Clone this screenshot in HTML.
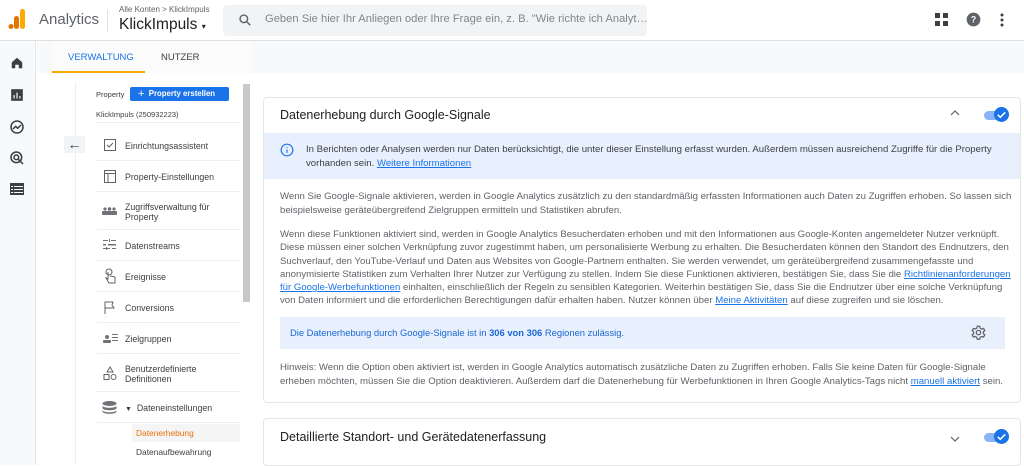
<!DOCTYPE html>
<html><head><meta charset="utf-8"><style>
*{box-sizing:border-box;margin:0;padding:0}
body{width:1024px;height:465px;overflow:hidden;background:#fff;font-family:"Liberation Sans",sans-serif;color:#5f6368;position:relative}
.a{position:absolute}
a{color:#1a73e8;text-decoration:underline}
.p{font-size:9.6px;line-height:13.5px;color:#5f6368}
.mi{position:absolute;left:97px;width:143px;border-bottom:1px solid #eee;font-size:8.8px;color:#3c4043}
.mi span{position:absolute;left:28px}
</style></head><body>
<!-- header -->
<div class="a" style="left:0;top:0;width:1024px;height:41px;border-bottom:1px solid #e0e0e0;background:#fff"></div>
<svg class="a" style="left:8px;top:8px" width="20" height="22" viewBox="0 0 20 22"><rect x="12" y="1" width="5" height="20" rx="2.5" fill="#f9ab00"/><rect x="6" y="8" width="5" height="13" rx="2.5" fill="#e37400"/><circle cx="3" cy="18.5" r="2.5" fill="#e37400"/></svg>
<div class="a" style="left:39px;top:11px;font-size:15px;color:#5f6368">Analytics</div>
<div class="a" style="left:107px;top:10px;width:1px;height:22px;background:#e0e0e0"></div>
<div class="a" style="left:119px;top:5px;font-size:8px;color:#5f6368">Alle Konten &gt; KlickImpuls</div>
<div class="a" style="left:119px;top:16px;font-size:15.5px;color:#202124">KlickImpuls <span style="font-size:8px">▾</span></div>
<div class="a" style="left:223px;top:5px;width:424px;height:31px;background:#f1f3f4;border-radius:4px"></div>
<svg class="a" style="left:238px;top:13px" width="14" height="14" viewBox="0 0 24 24"><circle cx="10" cy="10" r="6.5" stroke="#5f6368" stroke-width="2.5" fill="none"/><path d="M15 15l6 6" stroke="#5f6368" stroke-width="2.5"/></svg>
<div class="a" style="left:265px;top:13px;font-size:11.2px;color:#80868b;white-space:nowrap">Geben Sie hier Ihr Anliegen oder Ihre Frage ein, z. B. "Wie richte ich Analyt…</div>
<svg class="a" style="left:935px;top:13px" width="13" height="13" viewBox="0 0 13 13" fill="#3c4043"><rect x="0" y="0" width="5" height="5"/><rect x="8" y="0" width="5" height="5"/><rect x="0" y="8" width="5" height="5"/><rect x="8" y="8" width="5" height="5"/></svg>
<svg class="a" style="left:966px;top:12px" width="15" height="15" viewBox="0 0 24 24"><circle cx="12" cy="12" r="11" fill="#5f6368"/><text x="12" y="17" font-size="14" font-weight="bold" text-anchor="middle" fill="#fff" font-family="Liberation Sans">?</text></svg>
<svg class="a" style="left:1000px;top:13px" width="4" height="14" viewBox="0 0 4 14" fill="#3c4043"><circle cx="2" cy="2" r="1.5"/><circle cx="2" cy="7" r="1.5"/><circle cx="2" cy="12" r="1.5"/></svg>
<!-- left rail -->
<div class="a" style="left:0;top:41px;width:36px;height:424px;background:#f8f9fa;border-right:1px solid #e8e8e8"></div>
<svg class="a" style="left:10px;top:56px" width="14" height="14" viewBox="0 0 24 24" fill="#3c4043"><path d="M3 11L12 3l9 8v10h-6v-6H9v6H3z"/></svg>
<svg class="a" style="left:10px;top:88px" width="14" height="14" viewBox="0 0 24 24" fill="#3c4043"><path d="M2 2h20v20H2z"/><path d="M6 12h2v6H6zM11 8h2v10h-2zM16 14h2v4h-2z" fill="#fff"/></svg>
<svg class="a" style="left:9px;top:119px" width="16" height="16" viewBox="0 0 24 24" fill="none" stroke="#3c4043" stroke-width="2.3"><circle cx="12" cy="12" r="9"/><path d="M6 15l4-4 3 3 5-5"/></svg>
<svg class="a" style="left:9px;top:150px" width="16" height="16" viewBox="0 0 24 24" fill="none" stroke="#3c4043" stroke-width="2.3"><circle cx="11" cy="11" r="8"/><circle cx="11" cy="11" r="3.5"/><path d="M13 13l8 8"/></svg>
<svg class="a" style="left:10px;top:183px" width="14" height="12" viewBox="0 0 14 12" fill="#3c4043"><rect width="14" height="12"/><path d="M1 3h2v1H1zM4 3h9v1H4zM1 6h2v1H1zM4 6h9v1H4zM1 9h2v1H1zM4 9h9v1H4z" fill="#fff"/></svg>
<!-- tab bar -->
<div class="a" style="left:37px;top:41px;width:987px;height:32px;background:#f8f9fa"></div>
<div class="a" style="left:52px;top:41px;width:200px;height:32px;background:#fbfbfc"></div>
<div class="a" style="left:68px;top:52px;font-size:9.5px;color:#1a73e8">VERWALTUNG</div>
<div class="a" style="left:161px;top:52px;font-size:9.5px;color:#3c4043">NUTZER</div>
<div class="a" style="left:52px;top:71px;width:93px;height:2px;background:#f9ab00"></div>
<!-- left panel -->
<div class="a" style="left:75px;top:83px;width:1px;height:382px;background:#eee"></div>
<div class="a" style="left:243px;top:84px;width:7px;height:218px;background:#c8c8c8"></div>
<div class="a" style="left:96px;top:90px;font-size:7.5px;color:#3c4043">Property</div>
<div class="a" style="left:130px;top:87px;width:99px;height:14px;background:#1a73e8;border-radius:2px;color:#fff;font-size:7.8px;font-weight:bold;line-height:14px;padding-left:8px"><span style="font-size:11px;font-weight:normal;vertical-align:-1px">+</span>&nbsp;&nbsp;Property erstellen</div>
<div class="a" style="left:96px;top:110px;font-size:7.5px;color:#3c4043">KlickImpuls (250932223)</div>
<div class="a" style="left:96px;top:122px;width:144px;height:1px;background:#eee"></div>
<div class="a" style="left:64px;top:136px;width:21px;height:17px;background:#f1f3f4;font-size:14px;line-height:16px;text-align:center;color:#3c4043">←</div>
<div class="mi" style="top:130px;height:31px"><svg class="a" style="left:7px;top:8px" width="12" height="13" viewBox="0 0 12 13" fill="none" stroke="#5f6368"><rect x="0.5" y="1.5" width="11" height="11"/><path d="M3 7l2 2 4-4"/></svg><span style="top:11px">Einrichtungsassistent</span></div>
<div class="mi" style="top:161px;height:31px"><svg class="a" style="left:7px;top:9px" width="12" height="13" viewBox="0 0 12 13" fill="none" stroke="#5f6368"><rect x="0.5" y="0.5" width="11" height="12"/><path d="M0.5 3.5h11M4 3.5v9"/></svg><span style="top:11px">Property-Einstellungen</span></div>
<div class="mi" style="top:192px;height:38px"><svg class="a" style="left:5px;top:15px" width="15" height="8" viewBox="0 0 15 8" fill="#6f7378"><circle cx="3" cy="2" r="1.6"/><circle cx="7.5" cy="2" r="1.8"/><circle cx="12" cy="2" r="1.6"/><rect y="4" width="15" height="4" rx="1"/></svg><span style="top:10px;line-height:10px">Zugriffsverwaltung für<br>Property</span></div>
<div class="mi" style="top:230px;height:31px"><svg class="a" style="left:6px;top:9px" width="13" height="12" viewBox="0 0 13 12" fill="#6f7378"><path d="M0 1h5v1H0zM8 1h5v1H8zM0 5h3v1.5H0zM5 5h8v1.5H5zM0 9h7v1H0zM9 9h4v1H9zM6 0h1v3H6zM3 8h1v3H3z"/></svg><span style="top:11px">Datenstreams</span></div>
<div class="mi" style="top:261px;height:31px"><svg class="a" style="left:7px;top:7px" width="12" height="16" viewBox="0 0 12 16" fill="none" stroke="#5f6368"><circle cx="5" cy="4" r="3"/><path d="M4 4v7l-2-1 3 5h6V9l-5-1"/></svg><span style="top:11px">Ereignisse</span></div>
<div class="mi" style="top:292px;height:31px"><svg class="a" style="left:7px;top:9px" width="11" height="13" viewBox="0 0 11 13" fill="none" stroke="#5f6368"><path d="M1 13V1h8l-1 3 2 3H1"/></svg><span style="top:11px">Conversions</span></div>
<div class="mi" style="top:323px;height:31px"><svg class="a" style="left:6px;top:10px" width="15" height="10" viewBox="0 0 15 10" fill="#6f7378"><circle cx="4" cy="4" r="2"/><rect x="0" y="7" width="8" height="3" rx="1"/><path d="M9 1h6v1H9zM9 4h6v1H9zM9 7h6v1H9z"/></svg><span style="top:11px">Zielgruppen</span></div>
<div class="mi" style="top:354px;height:38px"><svg class="a" style="left:6px;top:12px" width="14" height="14" viewBox="0 0 14 14" fill="none" stroke="#5f6368"><path d="M7 1l3 5H4z"/><rect x="1" y="8.5" width="5" height="5"/><circle cx="10.5" cy="11" r="2.5"/></svg><span style="top:10px;line-height:10px">Benutzerdefinierte<br>Definitionen</span></div>
<div class="mi" style="top:392px;height:31px"><svg class="a" style="left:5px;top:9px" width="15" height="13" viewBox="0 0 15 13" fill="#6f7378"><ellipse cx="7.5" cy="2.5" rx="7" ry="2.5"/><path d="M0.5 4.5c0 3 14 3 14 0v2.5c0 3-14 3-14 0zM0.5 9c0 3 14 3 14 0v1.5c0 3-14 3-14 0z"/></svg><span style="top:11px"><span style="position:static;font-size:7px">▼</span>&nbsp; Dateneinstellungen</span></div>
<div class="a" style="left:132px;top:424px;width:108px;height:18px;background:#f5f5f5;font-size:8.4px;color:#e8710a;line-height:18px;padding-left:4px">Datenerhebung</div>
<div class="a" style="left:136px;top:447px;font-size:8.4px;color:#3c4043">Datenaufbewahrung</div>
<!-- card 1 -->
<div class="a" style="left:263px;top:97px;width:758px;height:306px;border:1px solid #e6e6e6;border-radius:4px"></div>
<div class="a" style="left:280px;top:108px;font-size:12.5px;color:#202124">Datenerhebung durch Google-Signale</div>
<svg class="a" style="left:950px;top:110px" width="10" height="6" viewBox="0 0 10 6"><path d="M1 5l4-4 4 4" stroke="#5f6368" fill="none" stroke-width="1.2"/></svg>
<div class="a" style="left:984px;top:111px;width:22px;height:9px;background:#8ab4f8;border-radius:5px"></div>
<svg class="a" style="left:994px;top:107px" width="15" height="15" viewBox="0 0 24 24"><circle cx="12" cy="12" r="12" fill="#1a73e8"/><path d="M6 12.5l4 4 8-8" stroke="#fff" stroke-width="2.4" fill="none"/></svg>
<div class="a" style="left:264px;top:133px;width:756px;height:46px;background:#e8f0fe"></div>
<svg class="a" style="left:280px;top:143px" width="14" height="14" viewBox="0 0 24 24" fill="none" stroke="#1a73e8" stroke-width="2"><circle cx="12" cy="12" r="10"/><path d="M12 11v6M12 7v1.5"/></svg>
<div class="a p" style="left:306px;top:143px;width:700px;color:#3c4043">In Berichten oder Analysen werden nur Daten berücksichtigt, die unter dieser Einstellung erfasst wurden. Außerdem müssen ausreichend Zugriffe für die Property vorhanden sein. <a>Weitere Informationen</a></div>
<div class="a p" style="left:280px;top:190px;width:732px">Wenn Sie Google-Signale aktivieren, werden in Google Analytics zusätzlich zu den standardmäßig erfassten Informationen auch Daten zu Zugriffen erhoben. So lassen sich beispielsweise geräteübergreifend Zielgruppen ermitteln und Statistiken abrufen.</div>
<div class="a p" style="left:280px;top:228px;width:732px;line-height:13.3px">Wenn diese Funktionen aktiviert sind, werden in Google Analytics Besucherdaten erhoben und mit den Informationen aus Google-Konten angemeldeter Nutzer verknüpft. Diese müssen einer solchen Verknüpfung zuvor zugestimmt haben, um personalisierte Werbung zu erhalten. Die Besucherdaten können den Standort des Endnutzers, den Suchverlauf, den YouTube-Verlauf und Daten aus Websites von Google-Partnern enthalten. Sie werden verwendet, um geräteübergreifend zusammengefasste und anonymisierte Statistiken zum Verhalten Ihrer Nutzer zur Verfügung zu stellen. Indem Sie diese Funktionen aktivieren, bestätigen Sie, dass Sie die <a>Richtlinienanforderungen für Google-Werbefunktionen</a> einhalten, einschließlich der Regeln zu sensiblen Kategorien. Weiterhin bestätigen Sie, dass Sie die Endnutzer über eine solche Verknüpfung von Daten informiert und die erforderlichen Berechtigungen dafür erhalten haben. Nutzer können über <a>Meine Aktivitäten</a> auf diese zugreifen und sie löschen.</div>
<div class="a" style="left:280px;top:317px;width:725px;height:32px;background:#e8f0fe"></div>
<div class="a" style="left:290px;top:327px;font-size:9.4px;color:#1967d2">Die Datenerhebung durch Google-Signale ist in <b>306 von 306</b> Regionen zulässig.</div>
<svg class="a" style="left:971px;top:325px" width="15" height="15" viewBox="0 0 24 24" fill="none" stroke="#5f6368" stroke-width="2"><circle cx="12" cy="12" r="3.5"/><path d="M10 2h4l.6 3 2.6 1.5 2.9-1 2 3.4-2.3 2v3l2.3 2-2 3.4-2.9-1-2.6 1.5-.6 3h-4l-.6-3-2.6-1.5-2.9 1-2-3.4 2.3-2v-3l-2.3-2 2-3.4 2.9 1L9.4 5z"/></svg>
<div class="a p" style="left:280px;top:361px;width:732px">Hinweis: Wenn die Option oben aktiviert ist, werden in Google Analytics automatisch zusätzliche Daten zu Zugriffen erhoben. Falls Sie keine Daten für Google-Signale erheben möchten, müssen Sie die Option deaktivieren. Außerdem darf die Datenerhebung für Werbefunktionen in Ihren Google Analytics-Tags nicht <a>manuell aktiviert</a> sein.</div>
<!-- card 2 -->
<div class="a" style="left:263px;top:418px;width:758px;height:48px;border:1px solid #e6e6e6;border-radius:4px"></div>
<div class="a" style="left:280px;top:430px;font-size:12.5px;color:#202124">Detaillierte Standort- und Gerätedatenerfassung</div>
<svg class="a" style="left:950px;top:436px" width="10" height="6" viewBox="0 0 10 6"><path d="M1 1l4 4 4-4" stroke="#5f6368" fill="none" stroke-width="1.2"/></svg>
<div class="a" style="left:984px;top:433px;width:22px;height:9px;background:#8ab4f8;border-radius:5px"></div>
<svg class="a" style="left:994px;top:429px" width="15" height="15" viewBox="0 0 24 24"><circle cx="12" cy="12" r="12" fill="#1a73e8"/><path d="M6 12.5l4 4 8-8" stroke="#fff" stroke-width="2.4" fill="none"/></svg>
</body></html>
